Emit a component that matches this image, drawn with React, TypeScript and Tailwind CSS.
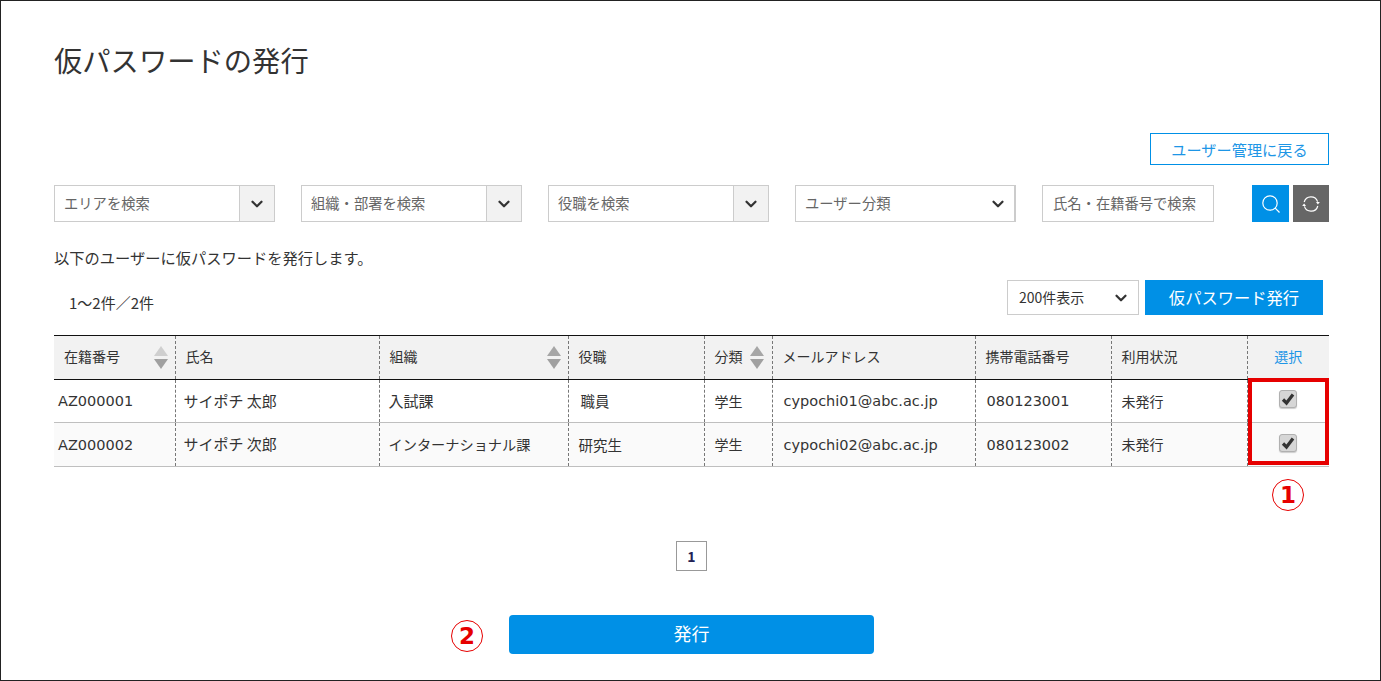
import { ChevronDown } from "lucide-react"

const rows = [
  { id: "AZ000001", name: "サイポチ 太郎", org: "入試課", orgCls: "text-[15px]", role: "職員", kind: "学生", mail: "cypochi01@abc.ac.jp", tel: "080123001", bg: "bg-white", h: "h-[43px]", roleCls: "pl-[12px]" },
  { id: "AZ000002", name: "サイポチ 次郎", org: "インターナショナル課", orgCls: "text-[14.2px]", role: "研究生", kind: "学生", mail: "cypochi02@abc.ac.jp", tel: "080123002", bg: "bg-[#fafafa]", h: "h-[44px]", roleCls: "pl-[10px]" },
]

const latin = { fontFamily: '"DejaVu Sans", "Noto Sans CJK JP", sans-serif' }

function SortArrows({ faded }: { faded?: boolean }) {
  return (
    <svg width="14" height="24" viewBox="0 0 14 24" className="shrink-0">
      <path d="M7 0 L14 10 H0 Z" fill={faded ? "#cfcfcf" : "#a6a6a6"} />
      <path d="M0 13 H14 L7 23 Z" fill="#a0a0a0" />
    </svg>
  )
}

function SelectBox({ label }: { label: string }) {
  return (
    <div className="flex h-[37px] w-[221px] border border-[#cccccc] bg-white">
      <div className="flex flex-1 items-center pb-[2px] pl-[9px] text-[14.3px] text-[#666666]">{label}</div>
      <div className="flex w-[35px] items-center justify-center border-l border-[#cccccc] bg-[#f2f2f2]">
        <ChevronDown size={18} strokeWidth={3} className="text-[#333333]" />
      </div>
    </div>
  )
}

function Check() {
  return (
    <div className="mx-auto mb-[4px] flex h-[18px] w-[18px] items-center justify-center rounded-[3px] border border-[#b0b0b0] bg-[#d6d6d6] shadow-[0_1px_1px_#cccccc]">
      <svg width="14" height="14" viewBox="0 0 14 14">
        <path d="M2 7.5 L5.5 11 L12 2.5" fill="none" stroke="#333333" strokeWidth="3.2" />
      </svg>
    </div>
  )
}

const th = "border-l border-dashed border-[#777777] px-0 text-left font-normal text-[14px] text-[#333333]"
const td = "border-l border-dashed border-[#777777] text-[#333333]"
const circled = "absolute flex h-[32px] w-[32px] items-center justify-center rounded-full border border-[#e60000] text-[23px] leading-none font-bold text-[#e60000]"

export default function App() {
  return (
    <div
      className="h-[681px] w-[1381px] overflow-hidden border border-[#222222] bg-white pl-[53px] pr-[51px] text-[#333333]"
      style={{ fontFamily: '"Noto Sans CJK JP", "Noto Sans", sans-serif' }}
    >
      <h1 className="mt-[38px] h-[94px] text-[28.3px] leading-[42px] font-normal text-[#333333]">仮パスワードの発行</h1>

      <div className="flex justify-end">
        <button className="h-[32px] w-[179px] border border-[#0090e6] text-[15.2px] text-[#1e96e6]">ユーザー管理に戻る</button>
      </div>

      {/* filters */}
      <div className="mt-[20px] flex h-[37px]">
        <SelectBox label="エリアを検索" />
        <div className="ml-[26px]"><SelectBox label="組織・部署を検索" /></div>
        <div className="ml-[26px]"><SelectBox label="役職を検索" /></div>
        <div className="ml-[26px] flex h-[37px] w-[221px] items-center justify-between border border-r-2 border-[#cccccc] pl-[9px] pr-[7px] text-[14.3px] text-[#666666]">
          <span className="pb-[2px]">ユーザー分類</span>
          <ChevronDown size={18} strokeWidth={3} className="text-[#333333]" />
        </div>
        <div className="ml-[26px] flex h-[37px] w-[172px] items-center border border-[#cccccc] pb-[2px] pl-[10px] text-[14.3px] text-[#666666]">氏名・在籍番号で検索</div>
        <button className="ml-[38px] flex h-[37px] w-[37px] items-center justify-center bg-[#0090e6]">
          <svg width="20" height="20" viewBox="0 0 20 20" fill="none" stroke="#ffffff" strokeWidth="1.2">
            <circle cx="9" cy="9" r="7.2" />
            <path d="M14.2 14.2 L18.5 18.5" />
          </svg>
        </button>
        <button className="ml-[4px] flex h-[37px] w-[36px] items-center justify-center bg-[#666666]">
          <svg width="20" height="20" viewBox="0 0 20 20" fill="none" stroke="#ffffff" strokeWidth="1.2">
            <path d="M3.2 8 A7 7 0 0 1 16.6 7.6" />
            <path d="M16.8 12 A7 7 0 0 1 3.4 12.4" />
            <path d="M15 8 L18.8 8 L16.9 10.6 Z" fill="#ffffff" stroke="none" />
            <path d="M1.2 12 L5 12 L3.1 9.4 Z" fill="#ffffff" stroke="none" />
          </svg>
        </button>
      </div>

      <p className="mt-[25px] h-[21px] text-[15.25px] leading-[20px]">以下のユーザーに仮パスワードを発行します。</p>

      <div className="mt-[12px] flex h-[35px] items-center">
        <span className="ml-[15px] mt-[12px] text-[15px]">1～2件／2件</span>
        <div className="ml-auto flex h-[35px] w-[132px] items-center justify-between border border-[#cccccc] pl-[11px] pr-[8px] text-[14px]">
          200件表示
          <ChevronDown size={18} strokeWidth={3} className="text-[#333333]" />
        </div>
        <button className="ml-[6px] mr-[6px] h-[35px] w-[178px] bg-[#0090e6] text-[16.3px] text-white">仮パスワード発行</button>
      </div>

      {/* table */}
      <div className="relative mt-[20px] w-[1275px]">
        <table className="w-[1275px] table-fixed border-collapse">
          <colgroup>
            <col className="w-[121px]" />
            <col className="w-[204px]" />
            <col className="w-[189px]" />
            <col className="w-[136px]" />
            <col className="w-[68px]" />
            <col className="w-[203px]" />
            <col className="w-[136px]" />
            <col className="w-[136px]" />
            <col className="w-[82px]" />
          </colgroup>
          <thead>
            <tr className="h-[44px] border-y border-y-[#111111] bg-[#f2f2f2]">
              <th className="px-0 text-left text-[14px] font-normal">
                <div className="flex items-center justify-between pl-[10px] pr-[7px]"><span className="pb-[2px]">在籍番号</span><SortArrows faded /></div>
              </th>
              <th className={th}><span className="block pb-[2px] pl-[10px]">氏名</span></th>
              <th className={th}>
                <div className="flex items-center justify-between pl-[10px] pr-[7px]"><span className="pb-[2px]">組織</span><SortArrows /></div>
              </th>
              <th className={th}><span className="block pb-[2px] pl-[10px]">役職</span></th>
              <th className={th}>
                <div className="flex items-center justify-between pl-[10px] pr-[8px]"><span className="pb-[2px]">分類</span><SortArrows /></div>
              </th>
              <th className={th}><span className="block pb-[2px] pl-[10px]">メールアドレス</span></th>
              <th className={th}><span className="block pb-[2px] pl-[10px]">携帯電話番号</span></th>
              <th className={th}><span className="block pb-[2px] pl-[10px]">利用状況</span></th>
              <th className="border-l border-dashed border-[#777777] pb-[2px] text-center text-[14px] font-normal text-[#1e96e6]">選択</th>
            </tr>
          </thead>
          <tbody>
            {rows.map((r) => (
              <tr key={r.id} className={`${r.h} border-b border-[#bfbfbf] ${r.bg}`}>
                <td className="pl-[4px] pt-[2px] text-[14.5px] text-[#333333]" style={latin}>{r.id}</td>
                <td className={`${td} text-[15px]`}><span className="pl-[8px]">{r.name}</span></td>
                <td className={`${td} ${r.orgCls}`}><span className="pl-[9px]">{r.org}</span></td>
                <td className={`${td} text-[14.5px]`}><span className={r.roleCls}>{r.role}</span></td>
                <td className={`${td} text-[14px]`}><span className="pl-[10px]">{r.kind}</span></td>
                <td className={`${td} pt-[2px] text-[14.5px]`} style={latin}><span className="pl-[11px]">{r.mail}</span></td>
                <td className={`${td} pt-[2px] text-[14.5px]`} style={latin}><span className="pl-[11px]">{r.tel}</span></td>
                <td className={`${td} text-[14px]`}><span className="pl-[10px]">未発行</span></td>
                <td className={td}><Check /></td>
              </tr>
            ))}
          </tbody>
        </table>
        {/* red highlight over the checkbox column */}
        <div className="absolute left-[1194px] top-[43px] h-[87px] w-[81px] border-[4px] border-[#e60000]" />
        <div className={`${circled} left-[1218px] top-[144px]`} style={latin}>1</div>
      </div>

      {/* pagination */}
      <div className="mt-[74px] flex justify-center">
        <div className="flex h-[30px] w-[31px] items-center justify-center border border-[#999999] text-[14px] font-bold text-[#222255]">1</div>
      </div>

      <div className="relative mt-[44px] flex justify-center">
        <div className={`${circled} left-[397px] top-[5px]`} style={latin}>2</div>
        <button className="h-[39px] w-[365px] rounded-[4px] bg-[#0090e6] pb-[3px] text-[18px] text-white">発行</button>
      </div>
    </div>
  )
}
